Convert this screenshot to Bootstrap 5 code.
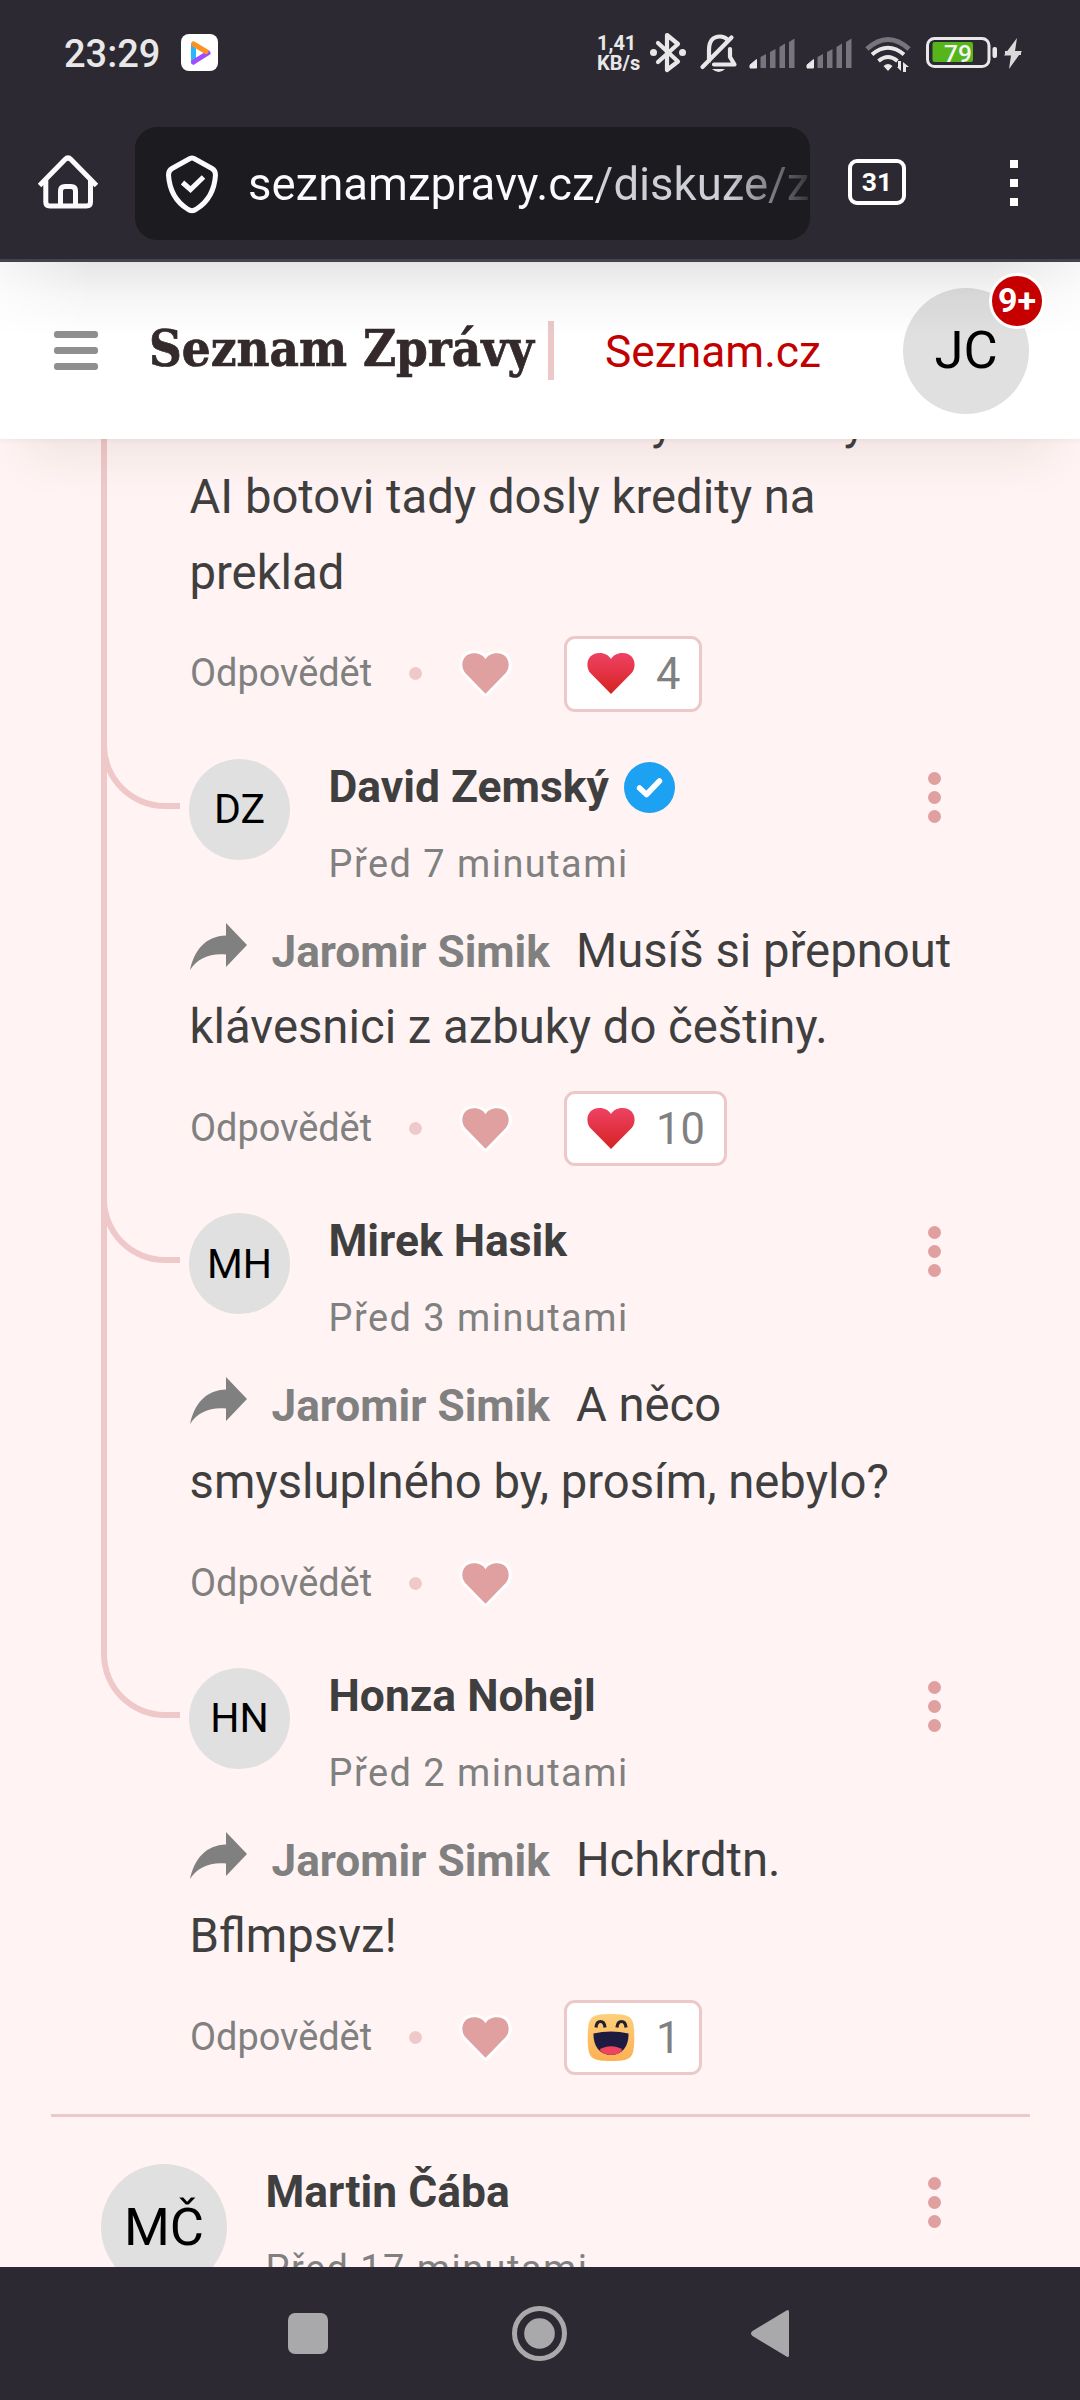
<!DOCTYPE html>
<html lang="cs">
<head>
<meta charset="utf-8">
<meta name="viewport" content="width=device-width, initial-scale=1">
<title>Seznam Zprávy – diskuze</title>
<link href="https://cdn.jsdelivr.net/npm/bootstrap@5.3.0/dist/css/bootstrap.min.css" rel="stylesheet">
<style>
body{font-family:Roboto,"Liberation Sans",sans-serif;background:#fff4f3;color:#3f3f3f;width:1080px;height:2400px;overflow:hidden}
svg{display:block;flex:none}
.chrome-dark{background:#2c2933;color:#fff}
.statusbar{height:105px;padding:0 58px 0 64px;color:#e8e8e8}
.clock{font-size:38px;font-weight:500;line-height:70px;width:117px;padding-top:2px}
.netspeed{font-size:20px;font-weight:700;line-height:20px;width:53px;padding-top:1px}
.toolbar{height:154px;padding:22px 0 0 38px}
.urlbox{width:675px;height:113px;border-radius:22px;background:#1c1b20;margin-left:37px;padding-left:31px;overflow:hidden}
.urltext{font-size:45.5px;line-height:116px;margin-left:30px;width:560px;background:linear-gradient(90deg,#fbfbfe 0 352px,#cfcfd8 352px 480px,#1c1b20 575px);-webkit-background-clip:text;background-clip:text;color:transparent}
.tabcount{width:58px;height:46px;border:4.5px solid #fff;border-radius:9px;font-size:26.5px;font-weight:700;margin:32px 0 0 38px;line-height:1}
.menudots i{display:block;width:8px;height:8px;background:#fff}
.menudots{gap:11px;margin:33px 0 0 104px}
.seam{height:3px;background:#46434d}
.sitehead{height:177px;background:#fff;z-index:2;padding-left:54px;box-shadow:0 42px 52px -28px rgba(60,20,20,.085),0 1px 6px rgba(0,0,0,.05)}
.sitehead::before{content:"";position:absolute;left:0;right:0;top:0;height:74px;z-index:3;background:linear-gradient(rgba(0,0,0,.10),rgba(0,0,0,.04) 45%,transparent);-webkit-mask-image:linear-gradient(90deg,rgba(0,0,0,.35),#000 90px,#000 990px,rgba(0,0,0,.35))}
.burger{gap:9.5px;width:44px}
.burger i{display:block;height:6.5px;border-radius:3px;background:#8f8f8f}
.brandname{font-family:"DejaVu Serif Condensed","DejaVu Serif",serif;font-stretch:condensed;font-weight:700;font-size:50.5px;color:#342a2b;width:399px;margin-left:51px;white-space:nowrap;line-height:60px;-webkit-text-stroke:.7px #342a2b;padding-bottom:3px}
.brandbar{width:6px;height:59px;background:#ecc8c9}
.seznamlink{font-size:44.3px;color:#c20000;margin-left:51px;width:298px;padding-top:3px}
.disc{border-radius:50%;background:#e0e0e0;color:#000;display:flex;align-items:center;justify-content:center;flex:none}
.disc-lg{width:126px;height:126px;font-size:52.5px}
.disc-sm{width:101px;height:101px;font-size:41px;padding-top:2px}
.alertcount{position:absolute;right:-16px;top:-15px;width:56px;height:56px;border:3px solid #fff;border-radius:50%;background:#c60000;color:#fff;font-weight:700;font-size:34px;z-index:4}
.feed{height:1828px;overflow:hidden}
.msg{font-size:47.25px;line-height:75.6px;height:151.2px;margin-left:189.5px;white-space:nowrap;color:#3f3f3f}
.firstmsg{height:225.8px;margin-top:-54.5px}
.tails span:first-child{margin-left:462px}
.tails span:last-child{margin-left:170px}
.actions{height:75.6px;margin:25.7px 0 0 190px;color:#808080}
.replylink{font-size:37.9px;width:219px;line-height:1;padding-top:1px}
.sepdot{width:13px;height:13px;border-radius:50%;background:#efc9ca}
.likeheart{margin-left:36px}
.reaction{height:75.6px;border:3px solid #ecc8c9;border-radius:11px;background:#fff;margin-left:51px;padding:0 19px 0 20px;font-size:43.5px;gap:21px}
.reaction span{padding-top:2px}
.reply{padding-top:47px;height:454.5px}
.reply::before{content:"";position:absolute;left:101px;top:18px;width:79px;height:79px;border:solid #efc9ca;border-width:0 0 6px 6px;border-bottom-left-radius:64px}
.threadline{position:absolute;left:101px;top:0;width:6px;height:1202px;background:#efc9ca}
.who{height:155.3px;padding-left:189px}
.names{margin-left:38.500px;width:599.500px}
.lastone .names{width:662.500px}
.uname{font-size:44.4px;font-weight:700;line-height:51px;height:51px;margin-top:3px;color:#3f3f3f;gap:15px}
.when{font-size:37.9px;letter-spacing:1.5px;line-height:44px;margin-top:29px;color:#808080}
.kebab{gap:6px;padding-top:13px}
.kebab i{display:block;width:13px;height:13px;border-radius:50%;background:#e0a0a0}
.mention{font-size:44.2px;font-weight:700;color:#808080;margin:0 26px 0 25px}
.arrow{display:inline-block;vertical-align:-3px}
.rule{height:3px;margin:39px 50px 0 51px;background:#ecc8c9}
.lastone{padding:47px 0 0 101px}
.navdock{height:133px;padding-left:288px}
</style>
<script src="https://cdn.jsdelivr.net/npm/bootstrap@5.3.0/dist/js/bootstrap.bundle.min.js"></script>
</head>
<body>
<svg width="0" height="0" class="position-absolute">
  <defs>
    <linearGradient id="red" x1="0" y1="0" x2="0" y2="1"><stop offset="0" stop-color="#ee4263"/><stop offset="1" stop-color="#d62222"/></linearGradient>
    <linearGradient id="sun" x1="0" y1="0" x2="0" y2="1"><stop offset="0" stop-color="#fdd07a"/><stop offset="1" stop-color="#fdb053"/></linearGradient>
    <path id="heart" d="M24 41L3.6 20.2C-2.5 13.5 0 0 12.4 0 18 0 22 2.6 24 6 26 2.6 30 0 35.6 0 48 0 50.5 13.5 44.4 20.2Z"/>
    <g id="pale"><use href="#heart" fill="none" stroke="#fff" stroke-width="6" stroke-linejoin="round"/><use href="#heart" fill="#e0a0a0"/></g>
    <path id="fwd" fill="#808080" d="M36 0L57 22 36 44V31.500C20 30 8 35 0 47 4 27 16 13 36 12.500Z"/>
  </defs>
</svg>

<header class="chrome-dark">
  <div class="statusbar d-flex align-items-center">
    <div class="clock">23:29</div>
    <svg width="37" height="37" viewBox="0 0 37 37"><rect width="37" height="37" rx="8" fill="#fff"/><g fill="none" stroke-width="5" stroke-linecap="round"><path d="M12.500 11V28" stroke="#2bb8fa"/><path d="M12.500 28L27 19" stroke="#a04dfb"/><path d="M12.500 10L25 17.500" stroke="#fb9320"/></g></svg>
    <div class="netspeed ms-auto">1,41<br>KB/s</div>
    <svg width="372" height="44" viewBox="650 30 372 44">
      <g fill="none" stroke="#e8e8e8" stroke-width="4.200" stroke-linejoin="round" stroke-linecap="round">
        <path d="M658 42L678 60.500 667 69V34L678 43 658 61"/>
        <path d="M709 60V49C709 39 714 35.500 720 35.500 723 35.500 726 37 728 39M730 48V56L734.500 63.500H714M702.500 66L731.500 36.500"/>
      </g>
      <circle cx="653.500" cy="51.500" r="3.500" fill="#e8e8e8"/><circle cx="682.500" cy="51.500" r="3.500" fill="#e8e8e8"/>
      <path d="M712 68H725Q719 74 712 68Z" fill="#e8e8e8"/>
      <g id="sig"><path d="M750 67V64L756.500 58.500V67Z" fill="#e8e8e8" stroke="#e8e8e8"/><path d="M760.500 67V56L766 53V67ZM770 67V51L775.500 48V67ZM779.500 67V46L785 42.500V67ZM789 67V41L794.500 37.500V67Z" fill="#77747d"/></g>
      <use href="#sig" x="57"/>
      <g fill="none" stroke="#e8e8e8" stroke-width="4"><path d="M867 48Q888 29 909 48" stroke="#77747d" stroke-width="5"/><path d="M872 53.500Q888 40 904 53.500"/><path d="M878.500 60Q888 52 897.500 60"/></g>
      <path d="M883.500 65Q888 61 892.500 65L888 70ZM898 60H901V70L897 66H898ZM903 71V61L909 66H906V71Z" fill="#e8e8e8"/>
      <rect x="927.500" y="37.500" width="61.500" height="28" rx="7" fill="none" stroke="#e8e8e8" stroke-width="3"/>
      <rect x="932.500" y="41" width="40.500" height="20" rx="2" fill="#55b51b"/>
      <rect x="992.500" y="46" width="4.500" height="11" rx="2" fill="#e8e8e8"/>
      <text x="944" y="61" font-size="24.500" font-weight="500" fill="#f4f4f4">79</text>
      <path d="M1017 37L1004 54.500H1011L1009 68 1022 50H1015Z" fill="#dadada"/>
      <path d="M1005 52H1021" stroke="#dadada" stroke-width="4"/>
    </svg>
  </div>
  <div class="toolbar d-flex align-items-start">
    <svg width="60" height="113" viewBox="0 0 60 113" fill="none" stroke="#fbfbfe" stroke-width="5"><path d="M1.500 58.500L27 32.500Q30 29.500 33 32.500L58.500 58.500M7.800 53V75Q7.800 79 11.800 79H48.500Q52.500 79 52.500 75V53M22.500 79V64Q22.500 59.500 27 59.500H33Q37.500 59.500 37.500 64V79"/></svg>
    <div class="urlbox d-flex">
      <svg width="52" height="113" viewBox="0 0 52 113" fill="none" stroke="#fbfbfe" stroke-width="5"><path d="M24 31.500Q26 30.500 28 31.500L46 41.500Q49.500 43.500 49.500 48 48 71 30.500 82Q26 85.500 21.500 82 4 71 2.500 48 2.500 43.500 6 41.500Z"/><path d="M16.500 55.500L24.500 62.500 37.500 50"/></svg>
      <div class="urltext text-nowrap">seznamzpravy.cz/diskuze/z</div>
    </div>
    <div class="tabcount d-flex align-items-center justify-content-center">31</div>
    <div class="menudots d-flex flex-column"><i></i><i></i><i></i></div>
  </div>
  <div class="seam"></div>
</header>

<nav class="sitehead position-relative d-flex align-items-center">
  <div class="burger d-flex flex-column"><i></i><i></i><i></i></div>
  <div class="brandname">Seznam Zprávy</div>
  <div class="brandbar"></div>
  <div class="seznamlink">Seznam.cz</div>
  <div class="disc disc-lg position-relative">JC<span class="alertcount d-flex align-items-center justify-content-center">9+</span></div>
</nav>

<main class="feed">
  <section class="position-relative overflow-hidden">
    <div class="threadline"></div>
    <p class="msg firstmsg mb-0"><span class="tails"><span>y</span><span>y</span></span><br>AI botovi tady dosly kredity na<br>preklad</p>
    <div class="actions d-flex align-items-center">
      <span class="replylink">Odpovědět</span><span class="sepdot"></span>
      <svg class="likeheart" width="55" height="49" viewBox="-4 -4 56 49"><use href="#pale"/></svg>
      <div class="reaction d-flex align-items-center"><svg width="48" height="41" viewBox="0 0 48 41"><use href="#heart" fill="url(#red)"/></svg><span>4</span></div>
    </div>

    <article class="reply position-relative">
      <div class="who d-flex align-items-start">
        <div class="disc disc-sm">DZ</div>
        <div class="names"><div class="uname d-flex align-items-center">David Zemský <svg width="51" height="51" viewBox="0 0 51 51"><circle cx="25.500" cy="25.500" r="25.500" fill="#1da1f2"/><path d="M15.500 26L22.500 32.500 35.500 19" fill="none" stroke="#fff" stroke-width="5.500" stroke-linecap="round" stroke-linejoin="round"/></svg></div><div class="when">Před 7 minutami</div></div>
        <div class="kebab d-flex flex-column"><i></i><i></i><i></i></div>
      </div>
      <p class="msg mb-0"><svg class="arrow" width="57" height="47"><use href="#fwd"/></svg><span class="mention">Jaromir Simik</span>Musíš si přepnout<br>klávesnici z azbuky do češtiny.</p>
      <div class="actions d-flex align-items-center">
        <span class="replylink">Odpovědět</span><span class="sepdot"></span>
        <svg class="likeheart" width="55" height="49" viewBox="-4 -4 56 49"><use href="#pale"/></svg>
        <div class="reaction d-flex align-items-center"><svg width="48" height="41" viewBox="0 0 48 41"><use href="#heart" fill="url(#red)"/></svg><span>10</span></div>
      </div>
    </article>

    <article class="reply position-relative">
      <div class="who d-flex align-items-start">
        <div class="disc disc-sm">MH</div>
        <div class="names"><div class="uname d-flex align-items-center">Mirek Hasik</div><div class="when">Před 3 minutami</div></div>
        <div class="kebab d-flex flex-column"><i></i><i></i><i></i></div>
      </div>
      <p class="msg mb-0"><svg class="arrow" width="57" height="47"><use href="#fwd"/></svg><span class="mention">Jaromir Simik</span>A něco<br>smysluplného by, prosím, nebylo?</p>
      <div class="actions d-flex align-items-center">
        <span class="replylink">Odpovědět</span><span class="sepdot"></span>
        <svg class="likeheart" width="55" height="49" viewBox="-4 -4 56 49"><use href="#pale"/></svg>
      </div>
    </article>

    <article class="reply position-relative">
      <div class="who d-flex align-items-start">
        <div class="disc disc-sm">HN</div>
        <div class="names"><div class="uname d-flex align-items-center">Honza Nohejl</div><div class="when">Před 2 minutami</div></div>
        <div class="kebab d-flex flex-column"><i></i><i></i><i></i></div>
      </div>
      <p class="msg mb-0"><svg class="arrow" width="57" height="47"><use href="#fwd"/></svg><span class="mention">Jaromir Simik</span>Hchkrdtn.<br>Bflmpsvz!</p>
      <div class="actions d-flex align-items-center">
        <span class="replylink">Odpovědět</span><span class="sepdot"></span>
        <svg class="likeheart" width="55" height="49" viewBox="-4 -4 56 49"><use href="#pale"/></svg>
        <div class="reaction d-flex align-items-center"><svg width="48" height="47" viewBox="0 0 48 47"><path d="M24 0C42 0 45 3 46.500 11 47.600 18 47.600 29 46.500 36 45 44 42 47 24 47S3 44 1.500 36C.4 29 .4 18 1.500 11 3 3 6 0 24 0Z" fill="url(#sun)"/><path d="M9 13.500Q9.500 7.500 13.500 7.500T18 13.500M30 13.500Q30.500 7.500 34.500 7.500T39 13.500" fill="none" stroke="#26202e" stroke-width="3.200"/><path d="M6.500 19.500Q24 15.500 41.500 19.500C42 31 36 41 24 41S6 31 6.500 19.500Z" fill="#1e1b41"/><path d="M12.500 36C18 31 30 31 35.500 36 30 42.500 18 42.500 12.500 36Z" fill="#ef4460"/></svg><span>1</span></div>
      </div>
    </article>
  </section>

  <div class="rule"></div>
  <article class="lastone d-flex align-items-start">
    <div class="disc disc-lg">MČ</div>
    <div class="names"><div class="uname d-flex align-items-center">Martin Čába</div><div class="when">Před 17 minutami</div></div>
    <div class="kebab d-flex flex-column"><i></i><i></i><i></i></div>
  </article>
</main>

<footer class="navdock chrome-dark d-flex align-items-center position-relative">
  <svg width="502" height="60" viewBox="288 2304 502 60" fill="#a9a9ab"><rect x="288" y="2313" width="40" height="41" rx="7"/><circle cx="539.500" cy="2333.500" r="25" fill="none" stroke="#a9a9ab" stroke-width="5"/><circle cx="539.500" cy="2333.500" r="15.300"/><path d="M786.500 2310.500Q789 2309 789 2312V2355Q789 2358 786.500 2356.500L752.500 2336Q749.500 2333.500 752.500 2331Z"/></svg>
</footer>
</body>
</html>
